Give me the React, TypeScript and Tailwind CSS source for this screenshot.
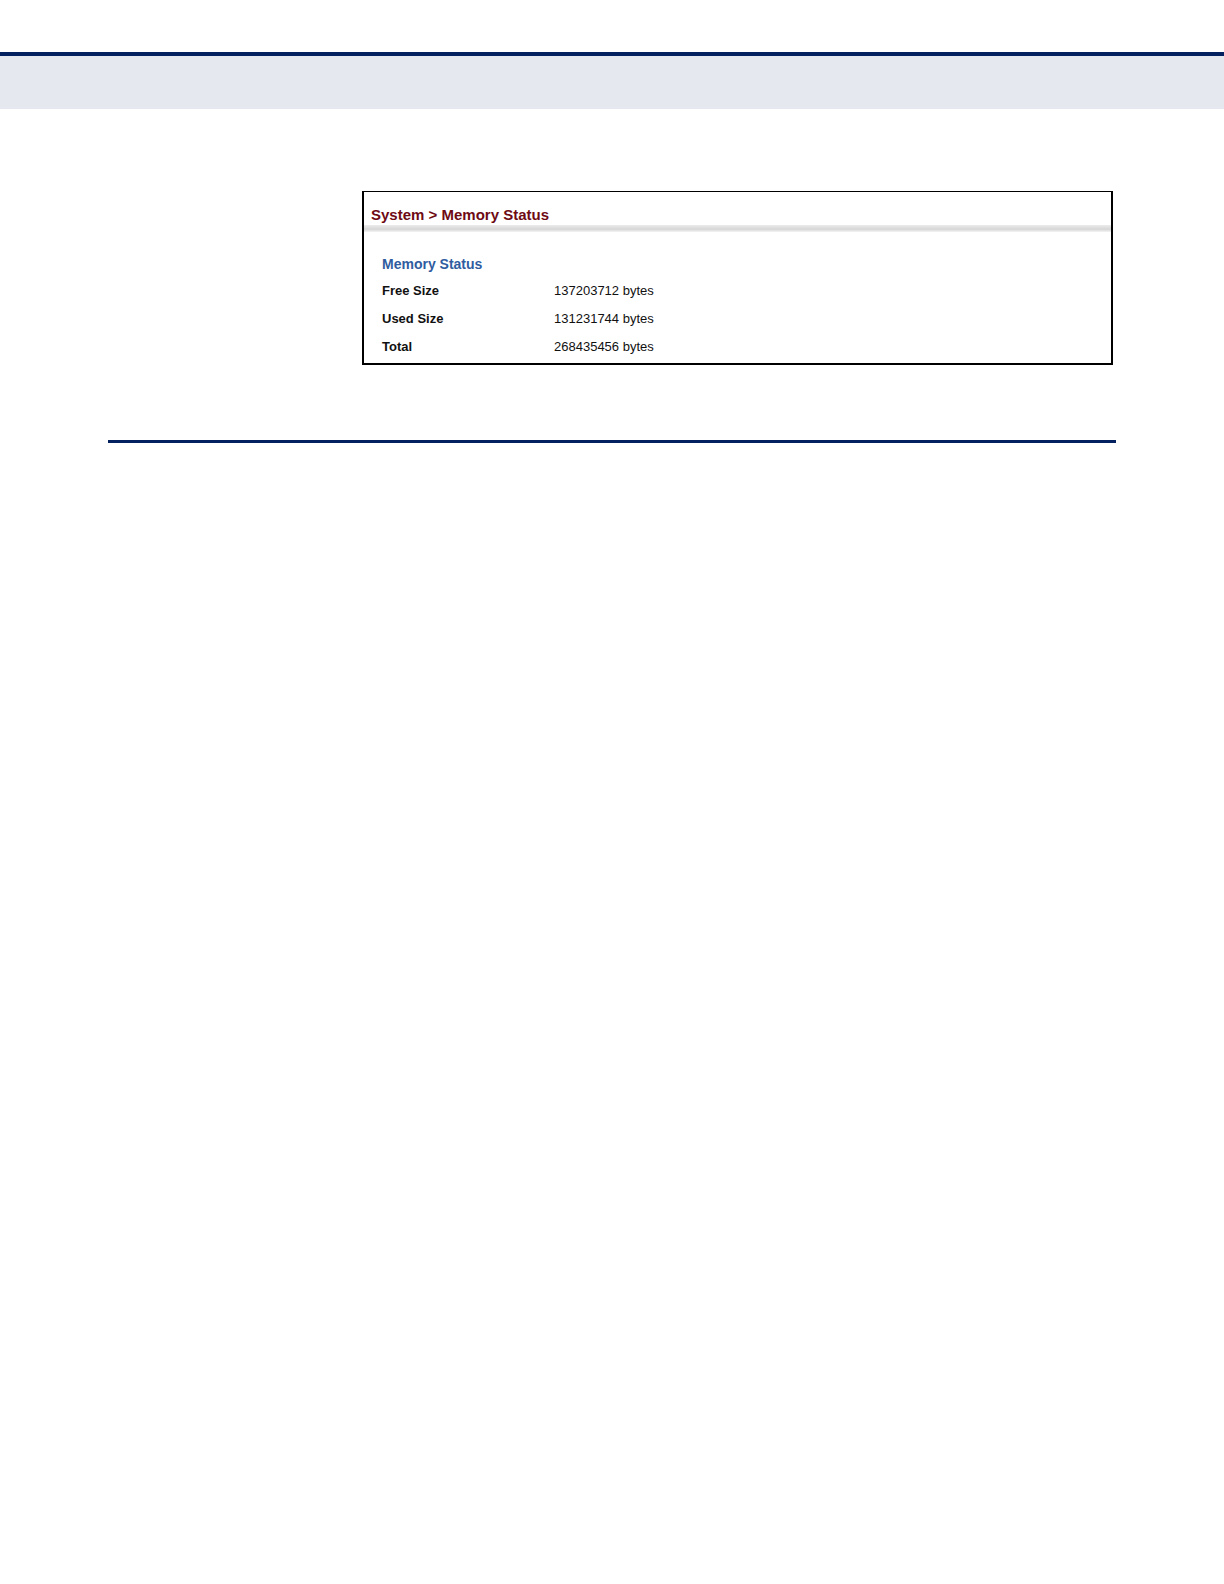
const memoryRows = [
  { label: "Free Size", value: "137203712 bytes" },
  { label: "Used Size", value: "131231744 bytes" },
  { label: "Total", value: "268435456 bytes" },
];

function MemoryStatusPanel() {
  return (
    <section className="mr-[3px] ml-[254px] border-2 border-t border-black bg-white">
      <h1 className="px-[7px] pt-[13px] text-[15px] leading-5 font-bold text-[#6e0a14]">
        System &gt; Memory Status
      </h1>
      <div className="h-[7px] bg-linear-to-b from-[#ececec] via-[#d6d6d6] via-60% to-[#f4f4f4]" />
      <div className="px-[18px] pt-5 pb-0.5">
        <h2 className="text-sm leading-6 font-bold text-[#2f5c9f]">
          Memory Status
        </h2>
        <table className="mt-px w-full table-fixed border-collapse text-[13px] text-[#111111]">
          <tbody>
            {memoryRows.map((row) => (
              <tr key={row.label} className="h-7">
                <th scope="row" className="w-[172px] p-0 text-left font-bold">
                  {row.label}
                </th>
                <td className="p-0">{row.value}</td>
              </tr>
            ))}
          </tbody>
        </table>
      </div>
    </section>
  );
}

export default function App() {
  return (
    <div className="min-h-screen bg-white pt-[52px] font-['Liberation_Sans',Arial,sans-serif]">
      <header className="h-[57px] border-t-4 border-[#03205f] bg-[#e5e8ef]" />
      <main className="px-[108px] pt-[82px]">
        <MemoryStatusPanel />
        <hr className="mt-[75px] border-t-3 border-[#03205f]" />
      </main>
    </div>
  );
}
